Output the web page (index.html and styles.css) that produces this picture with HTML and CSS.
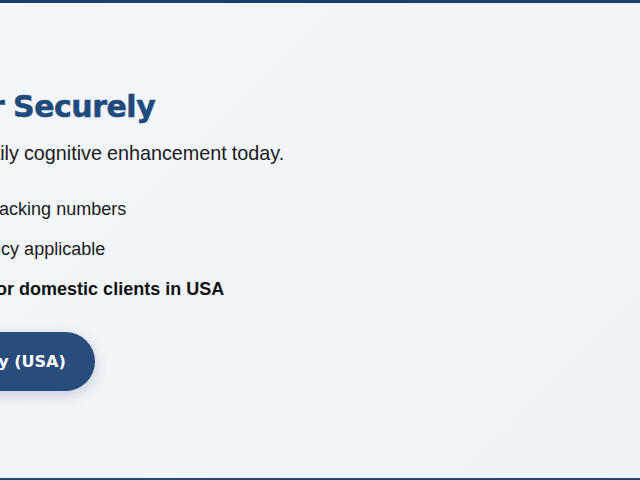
FILE: index.html
```html
<!DOCTYPE html>
<html lang="en">
<head>
  <meta charset="UTF-8">
  <meta name="viewport" content="width=device-width, initial-scale=1.0">
  <title>Order Securely</title>
  <link rel="stylesheet" href="styles.css">
</head>
<body>
  <section class="order-cta">
    <div class="cta-content">
      <h2 class="cta-title">Place Your Order Securely</h2>
      <p class="cta-lead">Order online and begin your daily cognitive enhancement today.</p>

      <ul class="cta-list">
        <li>
          <svg class="check" viewBox="0 0 18 18"><path d="M3 9.5l4 4 8-9" /></svg>
          <span>Quick, discreet shipping with tracking numbers</span>
        </li>
        <li>
          <svg class="check" viewBox="0 0 18 18"><path d="M3 9.5l4 4 8-9" /></svg>
          <span>Free reshipments &amp; refund policy applicable</span>
        </li>
        <li class="strong">
          <svg class="check" viewBox="0 0 18 18"><path d="M3 9.5l4 4 8-9" /></svg>
          <span>Free 2-day priority delivery for domestic clients in USA</span>
        </li>
      </ul>

      <a class="cta-button" href="#">Order Today – Fast Delivery (USA)</a>
    </div>
  </section>
</body>
</html>
```

FILE: styles.css
```css
html, body {
  margin: 0;
  padding: 0;
  overflow: hidden;
}
body {
  font-family: "Liberation Sans", Arial, sans-serif;
  color: #1a1a1a;
}
.order-cta {
  height: 480px;
  box-sizing: border-box;
  border-top: 3px solid #1c3d6e;
  border-bottom: 2px solid #27456f;
  background: linear-gradient(135deg, #f3f6fa 0%, #eef3f8 100%);
}
.cta-content {
  margin-left: -270px;
  padding-top: 86px;
  display: flex;
  flex-direction: column;
  align-items: flex-start;
}
.cta-title {
  margin: 0 0 14px;
  font-family: "DejaVu Sans", sans-serif;
  font-size: 30px;
  font-weight: bold;
  line-height: 36px;
  letter-spacing: -0.5px;
  word-spacing: -1px;
  color: #1f4a7c;
  -webkit-text-stroke: 0.5px #1f4a7c;
  white-space: nowrap;
}
.cta-lead {
  margin: 0 0 27px;
  font-size: 19.8px;
  line-height: 28.8px;
  word-spacing: -0.5px;
  white-space: nowrap;
}
.cta-list {
  list-style: none;
  margin: 0 0 29px;
  padding: 0;
  display: flex;
  flex-direction: column;
  gap: 12px;
}
.cta-list li {
  display: flex;
  align-items: center;
  gap: 7px;
  font-size: 18px;
  line-height: 28px;
  white-space: nowrap;
}
.cta-list li.strong {
  font-weight: bold;
  color: #111;
}
.check {
  width: 18px;
  height: 18px;
  flex: none;
  fill: none;
  stroke: #2e8b57;
  stroke-width: 2.5;
  stroke-linecap: round;
  stroke-linejoin: round;
}
.cta-button {
  display: inline-block;
  padding: 20px 29px 20px 32px;
  border-radius: 30px;
  background: #284c7b;
  color: #fff;
  font-family: "DejaVu Sans", sans-serif;
  font-size: 16px;
  font-weight: bold;
  line-height: 19px;
  text-decoration: none;
  white-space: nowrap;
  box-shadow: 0 4px 14px rgba(30, 60, 110, 0.22);
}
```
